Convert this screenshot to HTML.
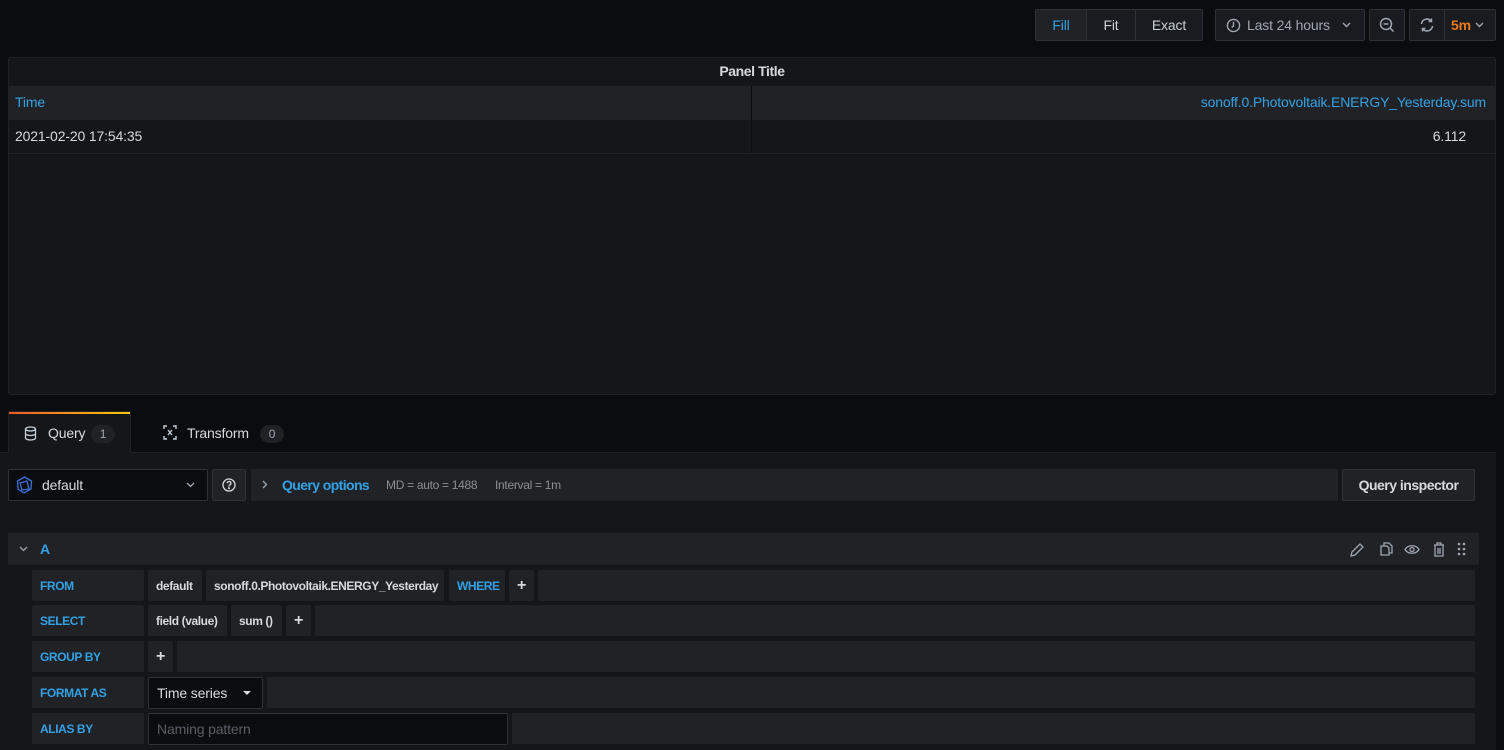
<!DOCTYPE html>
<html><head><style>
*{box-sizing:border-box;margin:0;padding:0}
body{width:1504px;height:750px;overflow:hidden;background:#0b0c0e;font-family:"Liberation Sans",sans-serif;font-size:14px;color:#d8d9da;position:relative;letter-spacing:-0.15px}
.a{position:absolute}
.btn{position:absolute;background:#181b1f;border:1px solid #2c3235;border-radius:2px;color:#c7d0d9;display:flex;align-items:center;justify-content:center;font-size:14px}
.blue{color:#33a2e5}
.seg{background:#202226;border-radius:2px;position:absolute;height:31px;display:flex;align-items:center;font-size:12px;font-weight:bold;padding-left:8px;letter-spacing:-0.4px;white-space:nowrap;overflow:hidden}
.lbl{color:#33a2e5}
.val{color:#d8d9da}
</style></head><body>
<div class="btn" style="left:1035px;top:9px;width:168px;height:32px;justify-content:flex-start">
 <div style="width:51px;height:30px;background:#202226;display:flex;align-items:center;justify-content:center;color:#33a2e5;border-right:1px solid #2c3235">Fill</div>
 <div style="width:49px;text-align:center;border-right:1px solid #2c3235;line-height:30px">Fit</div>
 <div style="width:66px;text-align:center">Exact</div>
</div>
<div class="btn" style="left:1215px;top:9px;width:150px;height:32px;justify-content:flex-start;padding-left:10px;color:#9fa7b3">
 <svg width="15" height="15" viewBox="0 0 16 16" fill="none" stroke="#9fa7b3" stroke-width="1.5"><circle cx="8" cy="8" r="6.5"/><path d="M8 4v4.5L6 10"/></svg>
 <span style="margin-left:6px">Last 24 hours</span>
 <svg style="margin-left:12px" width="9" height="6" viewBox="0 0 9 6" fill="none" stroke="#9fa7b3" stroke-width="1.4"><path d="M1 1l3.5 3.5L8 1"/></svg>
</div>
<div class="btn" style="left:1369px;top:9px;width:36px;height:32px">
 <svg width="16" height="16" viewBox="0 0 16 16" fill="none" stroke="#9fa7b3" stroke-width="1.5"><circle cx="7" cy="7" r="5.5"/><path d="M4.5 7h5M11 11l3.5 3.5"/></svg>
</div>
<div class="btn" style="left:1409px;top:9px;width:87px;height:32px;justify-content:flex-start">
 <div style="width:35px;height:30px;display:flex;align-items:center;justify-content:center;border-right:1px solid #2c3235">
 <svg width="16" height="16" viewBox="0 0 16 16" fill="none" stroke="#9fa7b3" stroke-width="1.5"><path d="M2.5 7a5.5 5.5 0 0 1 10-2.5M13.5 9a5.5 5.5 0 0 1-10 2.5M12.5 1.5v3h-3M3.5 14.5v-3h3"/></svg></div>
 <span style="color:#eb7b18;font-weight:bold;margin-left:6px">5m</span>
 <svg style="margin-left:4px" width="9" height="6" viewBox="0 0 9 6" fill="none" stroke="#9fa7b3" stroke-width="1.4"><path d="M1 1l3.5 3.5L8 1"/></svg>
</div>
<div class="a" style="left:8px;top:57px;width:1488px;height:338px;background:#141619;border:1px solid #202226;border-radius:3px">
 <div class="a" style="left:0;top:5px;width:100%;text-align:center;font-weight:bold;font-size:14px;color:#d8d9da;letter-spacing:-0.4px">Panel Title</div>
 <div class="a" style="left:0;top:28px;width:100%;height:34px;background:#202226"></div>
 <div class="a blue" style="left:6px;top:36px">Time</div>
 <div class="a blue" style="right:9px;top:36px">sonoff.0.Photovoltaik.ENERGY_Yesterday.sum</div>
 <div class="a" style="left:742px;top:28px;width:1px;height:68px;background:#0b0c0e"></div>
 <div class="a" style="left:0;top:95px;width:100%;height:1px;background:#202226"></div>
 <div class="a" style="left:6px;top:70px">2021-02-20 17:54:35</div>
 <div class="a" style="right:29px;top:70px">6.112</div>
</div>
<div class="a" style="left:0;top:452px;width:1496px;height:298px;background:#141619;border-top:1px solid #202226"></div>
<div class="a" style="left:8px;top:411px;width:123px;height:42px;background:#141619;border:1px solid #202226;border-bottom:none">
 <div style="height:2px;background:linear-gradient(90deg,#f05a28,#fbca0a)"></div>
</div>
<svg class="a" style="left:24px;top:426px" width="13" height="15" viewBox="0 0 13 15" fill="none" stroke="#c7d0d9" stroke-width="1.3"><ellipse cx="6.5" cy="3" rx="5" ry="2"/><path d="M1.5 3v9c0 1.1 2.2 2 5 2s5-.9 5-2V3M1.5 7.5c0 1.1 2.2 2 5 2s5-.9 5-2"/></svg>
<div class="a" style="left:48px;top:425px;color:#d8d9da">Query</div>
<div class="a" style="left:91px;top:425px;width:24px;height:18px;border-radius:9px;background:#202226;color:#9fa7b3;font-size:12px;text-align:center;line-height:18px">1</div>
<svg class="a" style="left:163px;top:425px" width="14" height="15" viewBox="0 0 14 15" fill="none" stroke="#c7d0d9" stroke-width="1.4"><path d="M1 4V1h3M10 1h3v3M13 11v3h-3M4 14H1v-3M5 5l4 5M9 5l-4 5"/></svg>
<div class="a" style="left:187px;top:425px;color:#d8d9da">Transform</div>
<div class="a" style="left:260px;top:425px;width:24px;height:18px;border-radius:9px;background:#202226;color:#9fa7b3;font-size:12px;text-align:center;line-height:18px">0</div>
<div class="a" style="left:8px;top:469px;width:200px;height:32px;background:#0b0c0e;border:1px solid #2c3235;border-radius:2px"></div>
<svg class="a" style="left:16px;top:476px" width="17" height="18" viewBox="0 0 17 18" fill="none" stroke="#3d71d9" stroke-width="1.3"><path d="M8.5 1L15.5 5L15 13L8 17L2 13L1.5 5Z M4 7l7-2 2 8-7 1z"/></svg>
<div class="a" style="left:42px;top:477px;color:#d8d9da">default</div>
<svg class="a" style="left:186px;top:482px" width="9" height="6" viewBox="0 0 9 6" fill="none" stroke="#9fa7b3" stroke-width="1.3"><path d="M1 1l3.5 3.5L8 1"/></svg>
<div class="btn" style="left:212px;top:469px;width:34px;height:32px;background:#202226">
<svg width="14" height="14" viewBox="0 0 14 14" fill="none" stroke="#d8d9da" stroke-width="1.3"><circle cx="7" cy="7" r="6"/><path d="M5.3 5.3a1.8 1.8 0 1 1 2.3 1.7c-.4.2-.6.5-.6 1v.5"/><circle cx="7" cy="10.2" r=".4" fill="#d8d9da"/></svg></div>
<div class="a" style="left:251px;top:469px;width:1087px;height:32px;background:#202226;border-radius:2px"></div>
<svg class="a" style="left:262px;top:480px" width="6" height="9" viewBox="0 0 6 9" fill="none" stroke="#9fa7b3" stroke-width="1.3"><path d="M1 1l3.5 3.5L1 8"/></svg>
<div class="a" style="left:282px;top:477px;color:#33a2e5;font-weight:bold;letter-spacing:-0.6px">Query options</div>
<div class="a" style="left:386px;top:478px;color:#8e8e8e;font-size:12px;letter-spacing:-0.3px">MD = auto = 1488</div>
<div class="a" style="left:495px;top:478px;color:#8e8e8e;font-size:12px;letter-spacing:-0.3px">Interval = 1m</div>
<div class="btn" style="left:1342px;top:469px;width:133px;height:32px;background:#202226;font-weight:bold;color:#d8d9da;letter-spacing:-0.5px">Query inspector</div>
<div class="a" style="left:8px;top:533px;width:1471px;height:32px;background:#202226;border-radius:2px"></div>
<svg class="a" style="left:19px;top:546px" width="9" height="6" viewBox="0 0 9 6" fill="none" stroke="#9fa7b3" stroke-width="1.3"><path d="M1 1l3.5 3.5L8 1"/></svg>
<div class="a" style="left:40px;top:541px;color:#33a2e5;font-weight:bold">A</div>
<svg class="a" style="left:1350px;top:542px" width="120" height="15" viewBox="0 0 120 15" fill="none" stroke="#9fa7b3" stroke-width="1.3">
<path d="M1 14l1-4 8-8 3 3-8 8z"/>
<path d="M31 4h6l2 2v7h-8z M34 4V1h5l3 3v7h-3"/>
<path d="M55 7.5c3-5 11-5 14 0c-3 5-11 5-14 0z"/><circle cx="62" cy="7.5" r="2"/>
<path d="M84 3h10M87 3V1h4v2M85 3v11h8V3M88 6v6M90 6v6"/>
<g fill="#9fa7b3" stroke="none"><circle cx="109" cy="2" r="1.3"/><circle cx="114" cy="2" r="1.3"/><circle cx="109" cy="7" r="1.3"/><circle cx="114" cy="7" r="1.3"/><circle cx="109" cy="12" r="1.3"/><circle cx="114" cy="12" r="1.3"/></g>
</svg>
<div class="seg lbl" style="left:32px;top:570px;width:112px">FROM</div>
<div class="seg val" style="left:148px;top:570px;width:54px">default</div>
<div class="seg val" style="left:206px;top:570px;width:238px">sonoff.0.Photovoltaik.ENERGY_Yesterday</div>
<div class="seg lbl" style="left:449px;top:570px;width:56px">WHERE</div>
<div class="seg val" style="left:509px;top:570px;width:25px;font-size:16px">+</div>
<div class="seg" style="left:538px;top:570px;width:937px"></div>
<div class="seg lbl" style="left:32px;top:605px;width:112px">SELECT</div>
<div class="seg val" style="left:148px;top:605px;width:79px">field (value)</div>
<div class="seg val" style="left:231px;top:605px;width:51px">sum ()</div>
<div class="seg val" style="left:286px;top:605px;width:25px;font-size:16px">+</div>
<div class="seg" style="left:315px;top:605px;width:1160px"></div>
<div class="seg lbl" style="left:32px;top:641px;width:112px">GROUP BY</div>
<div class="seg val" style="left:148px;top:641px;width:25px;font-size:16px">+</div>
<div class="seg" style="left:177px;top:641px;width:1298px"></div>
<div class="seg lbl" style="left:32px;top:677px;width:112px">FORMAT AS</div>
<div class="a" style="left:148px;top:677px;width:115px;height:32px;background:#0b0c0e;border:1px solid #2c3235;border-radius:2px;padding-left:8px;line-height:30px;color:#d8d9da">Time series</div>
<svg class="a" style="left:243px;top:691px" width="8" height="4" viewBox="0 0 8 4"><path d="M0 0h8L4 4z" fill="#d8d9da"/></svg>
<div class="seg" style="left:267px;top:677px;width:1208px"></div>
<div class="seg lbl" style="left:32px;top:713px;width:112px">ALIAS BY</div>
<div class="a" style="left:148px;top:713px;width:360px;height:32px;background:#0b0c0e;border:1px solid #2c3235;border-radius:2px;padding-left:8px;line-height:30px;color:#5a5f66">Naming pattern</div>
<div class="seg" style="left:512px;top:713px;width:963px"></div>
</body></html>
